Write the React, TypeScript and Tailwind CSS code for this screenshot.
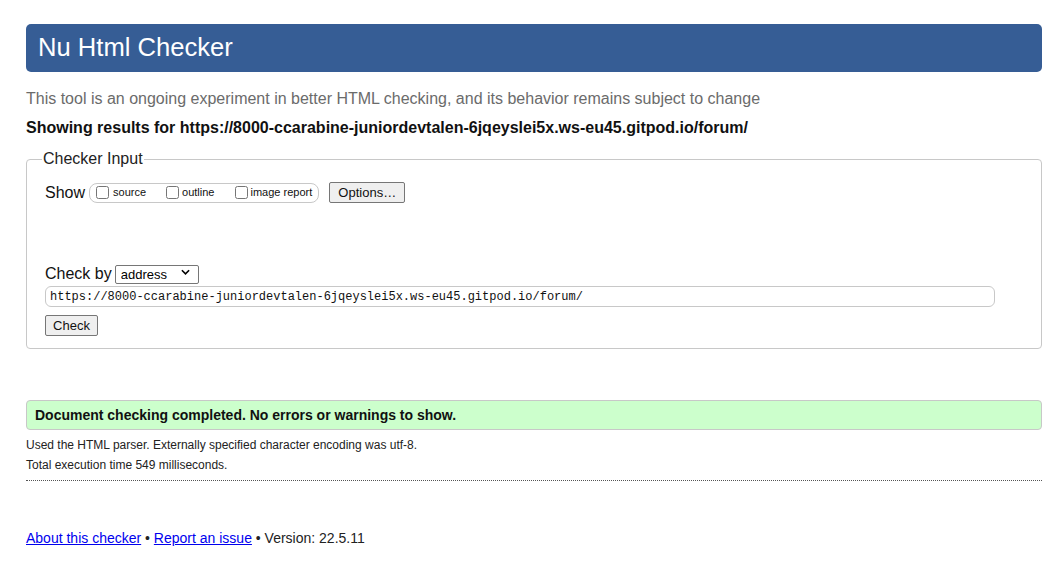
export default function App() {
  const url = "https://8000-ccarabine-juniordevtalen-6jqeyslei5x.ws-eu45.gitpod.io/forum/";

  return (
    <div className="min-h-[570px] bg-white font-['Liberation_Sans',Arial,sans-serif] text-[#111]">
      <div className="ml-[26px] w-[1016px] pt-[24px]">
        {/* Title bar */}
        <h1 className="flex h-[48px] items-center rounded-[5px] bg-[#365d95] pl-[12px] text-[25.6px] leading-none text-white">
          Nu Html Checker
        </h1>

        <p className="mt-[18px] text-[16px] leading-[18px] text-[#6b6b6b]">
          This tool is an ongoing experiment in better HTML checking, and its behavior remains subject to change
        </p>
        <p className="mt-[11px] text-[16px] font-bold leading-[18px]">
          Showing results for {url}
        </p>

        {/* Checker input */}
        <fieldset className="mt-[13px] rounded-[4px] border border-[#c8c8c8] pb-[12px] pl-[18px]">
          <legend className="-ml-[3px] px-[1px] text-[16px] leading-[18px] text-[#222]">Checker Input</legend>

          <div className="mt-[14px] flex h-[21px] items-center">
            <span className="text-[16px] leading-[18px]">Show</span>
            <div className="ml-[4px] flex h-[20px] items-center rounded-[8px] border border-[#c8c8c8] pl-[6px] pr-[6px]">
              <input type="checkbox" className="h-[13px] w-[13px]" />
              <span className="ml-[4px] text-[11px] leading-none">source</span>
              <input type="checkbox" className="ml-[20px] h-[13px] w-[13px]" />
              <span className="ml-[3px] text-[11px] leading-none">outline</span>
              <input type="checkbox" className="ml-[21px] h-[13px] w-[13px]" />
              <span className="ml-[2px] text-[11px] leading-none">image report</span>
            </div>
            <button className="ml-[10px] h-[21px] w-[76px] rounded-[2px] border border-[#767676] bg-[#efefef] text-[13px] leading-none">
              Options…
            </button>
          </div>

          <div className="mt-[61px] flex h-[19px] items-center">
            <span className="text-[16px] leading-[18px]">Check by</span>
            <div className="relative ml-[3px]">
              <select className="h-[19px] w-[84px] appearance-none rounded-[2px] border border-[#767676] bg-white pl-[5px] text-[13px] leading-none text-black">
                <option>address</option>
              </select>
              <svg viewBox="0 0 10 6" className="pointer-events-none absolute right-[9px] top-[7px] h-[6px] w-[9px]">
                <path d="M1 1 L5 5 L9 1" stroke="#000" strokeWidth="1.8" fill="none" />
              </svg>
            </div>
          </div>

          <input
            readOnly
            value={url}
            className="mt-[3px] block h-[21px] w-[950px] rounded-[6px] border border-[#c8c8c8] px-[4px] font-['Liberation_Mono','DejaVu_Sans_Mono',monospace] text-[12px] leading-none text-[#111]"
          />

          <button className="mt-[8px] block h-[21px] w-[53px] rounded-[2px] border border-[#767676] bg-[#efefef] text-[13px] leading-none">
            Check
          </button>
        </fieldset>

        {/* Result */}
        <div className="mt-[51px] flex h-[30px] items-center rounded-[4px] border border-[#c8c8c8] bg-[#ccffcc] pl-[8px] text-[14px] font-bold">
          Document checking completed. No errors or warnings to show.
        </div>
        <p className="mt-[8px] text-[12px] leading-[15px] text-[#222]">
          Used the HTML parser. Externally specified character encoding was utf-8.
        </p>
        <p className="mt-[5px] text-[12px] leading-[15px] text-[#222]">Total execution time 549 milliseconds.</p>
        <div className="mt-[7px] border-t border-dotted border-[#555]" />

        {/* Footer */}
        <p className="mt-[49px] text-[14px] leading-[16px] text-[#222]">
          <a href="#" className="text-[#0000ee] underline">About this checker</a>
          {" • "}
          <a href="#" className="text-[#0000ee] underline">Report an issue</a>
          {" • Version: 22.5.11"}
        </p>
      </div>
    </div>
  );
}
